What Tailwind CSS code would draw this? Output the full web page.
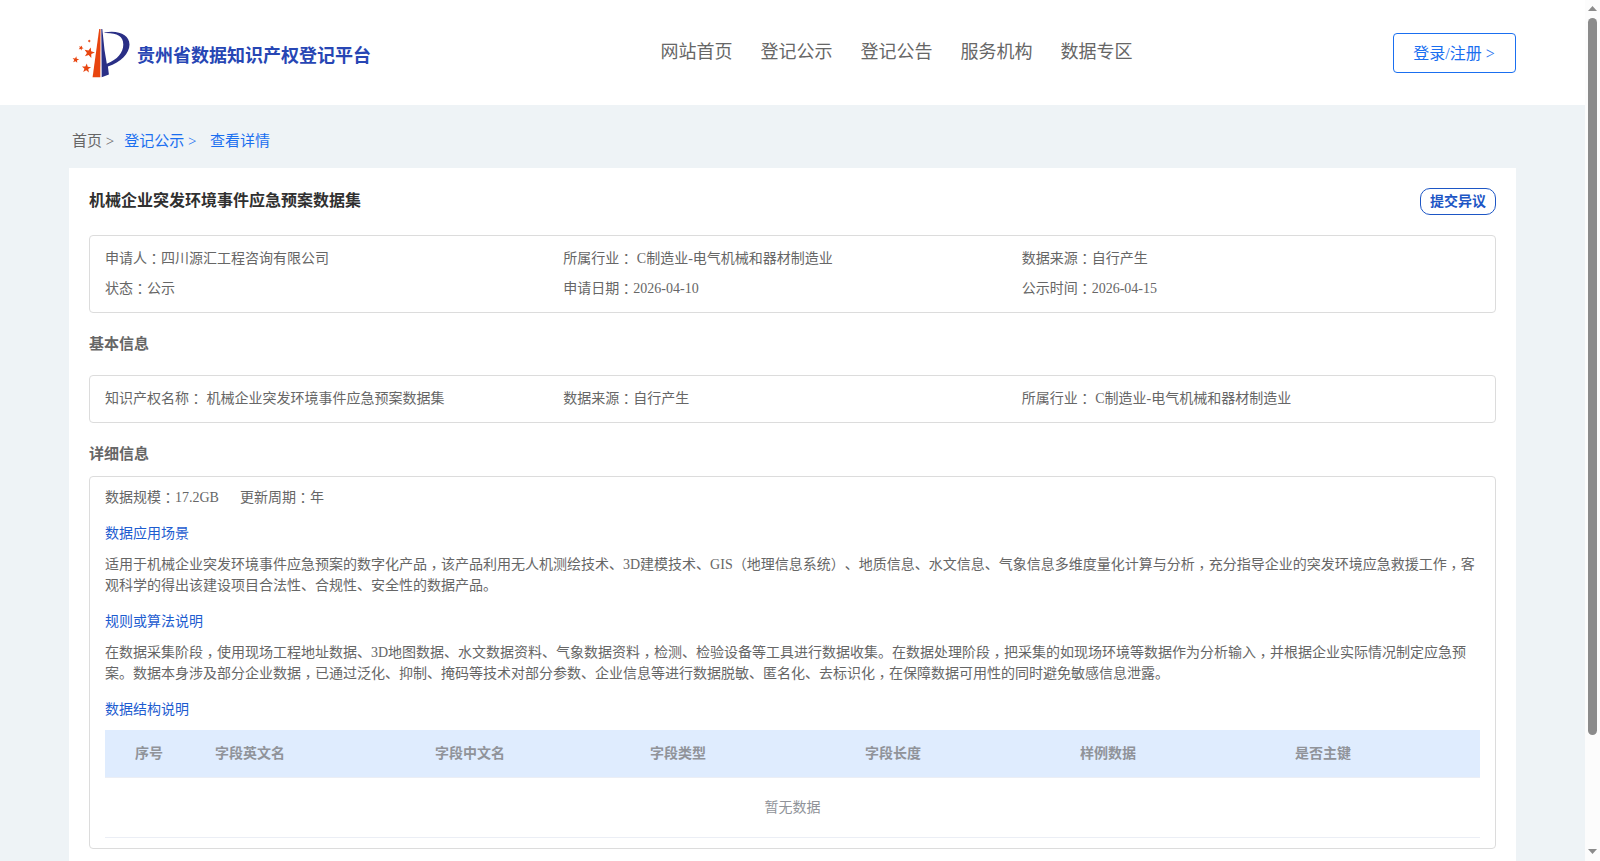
<!doctype html>
<html lang="zh-CN">
<head>
  <meta charset="utf-8" />
  <meta name="viewport" content="width=device-width,initial-scale=1" />
  <title>贵州省数据知识产权登记平台</title>
  <script src="https://cdn.jsdelivr.net/npm/@tailwindcss/browser@4"></script>
</head>
<body class="flex h-[861px] overflow-hidden bg-[#eef3f6] font-['Liberation_Serif','Noto_Sans_CJK_SC',serif] text-sm leading-[21px] text-[#666] [text-spacing-trim:space-all]">
  <div class="w-[1585px] shrink-0">

    <!-- Header -->
    <header class="flex h-[105px] bg-white pr-[69px] pl-[72px]">
      <div class="flex w-[588.5px] pt-[28px]">
        <svg class="h-[50px] w-[58px]" viewBox="0 0 58 50">
          <defs>
            <path id="star" d="M0-1L.25-.34.95-.31.4.13.59.81 0 .42-.59.81-.4.13-.95-.31-.25-.34z" />
          </defs>
          <path fill="#e8450f" d="M27.2 1h1.3l-.2 48.300h-7.700z" />
          <path fill="#2a2f86" d="M29.300 1h1l2.200 21 2.300 13.700C45.500 31.500 51.300 24.500 51.300 16.500 51.300 8 45 4.800 32.500 5.100v-.7C47 1.800 57.500 7 57.500 16.500c0 9-8.500 17.500-21.600 22.100l1 7.800-7.200 2.900z" />
          <g fill="#e8450f">
            <use href="#star" transform="translate(17.3 24.800) rotate(15) scale(5.600)" />
            <use href="#star" transform="translate(14.400 40.300) rotate(5) scale(4.800)" />
            <use href="#star" transform="translate(3.700 31.700) rotate(10) scale(3.500)" />
            <use href="#star" transform="translate(9 19.900) rotate(25) scale(2.600)" />
            <use href="#star" transform="translate(17.300 13) rotate(20) scale(1.700)" />
          </g>
        </svg>
        <div class="pt-[15px] pl-[7px] text-lg leading-[27px] font-bold text-[#2746b4]">贵州省数据知识产权登记平台</div>
      </div>
      <nav class="flex flex-1 gap-7 pt-[39px] text-lg leading-[27px]">
        <a>网站首页</a>
        <a>登记公示</a>
        <a>登记公告</a>
        <a>服务机构</a>
        <a>数据专区</a>
      </nav>
      <button class="mt-[33px] h-10 w-[123px] rounded border border-[#1a6ff0] pt-px pr-px text-base text-[#1a6ff0]">登录/注册 &gt;</button>
    </header>

    <!-- Breadcrumb -->
    <div class="flex h-[63px] pt-[25px] pl-[72px] text-[15px] leading-[22px]">
      <span class="mr-[10px]">首页 &gt;</span>
      <span class="mr-[13.5px] text-[#1a6ff0]">登记公示 &gt;</span>
      <span class="text-[#1a6ff0]">查看详情</span>
    </div>

    <main class="ml-[69px] h-[693px] w-[1447px] bg-white px-5 pt-5">
      <div class="flex h-[47px] justify-between">
        <h1 class="text-base leading-[25px] font-bold text-[#303030]">机械企业突发环境事件应急预案数据集</h1>
        <button class="h-[27px] w-[76px] rounded-[10px] border border-[#1d56c5] font-bold text-[#1d56c5]">提交异议</button>
      </div>

      <section class="grid h-[78px] grid-cols-3 content-start gap-y-[9px] rounded border border-[#dcdcdc] px-[15px] pt-[12px]">
        <div>申请人：四川源汇工程咨询有限公司</div>
        <div>所属行业： C制造业-电气机械和器材制造业</div>
        <div>数据来源：自行产生</div>
        <div>状态：公示</div>
        <div>申请日期：2026-04-10</div>
        <div>公示时间：2026-04-15</div>
      </section>

      <h2 class="h-[62px] pt-5 text-[15px] leading-[22px] font-bold">基本信息</h2>
      <section class="grid h-12 grid-cols-3 rounded border border-[#dcdcdc] px-[15px] pt-[12px]">
        <div>知识产权名称： 机械企业突发环境事件应急预案数据集</div>
        <div>数据来源：自行产生</div>
        <div>所属行业： C制造业-电气机械和器材制造业</div>
      </section>

      <h2 class="h-[53px] pt-5 text-[15px] leading-[22px] font-bold">详细信息</h2>
      <section class="h-[373px] rounded border border-[#dcdcdc] px-[15px] pt-[10px]">
        <div class="flex gap-[21px]">
          <div>数据规模：17.2GB</div>
          <div>更新周期：年</div>
        </div>
        <h3 class="mt-[15px] text-[#1d5cd0]">数据应用场景</h3>
        <p class="mt-[10px]">适用于机械企业突发环境事件应急预案的数字化产品，该产品利用无人机测绘技术、3D建模技术、GIS（地理信息系统）、地质信息、水文信息、气象信息多维度量化计算与分析，充分指导企业的突发环境应急救援工作，客观科学的得出该建设项目合法性、合规性、安全性的数据产品。</p>
        <h3 class="mt-[15px] text-[#1d5cd0]">规则或算法说明</h3>
        <p class="mt-[10px]">在数据采集阶段，使用现场工程地址数据、3D地图数据、水文数据资料、气象数据资料，检测、检验设备等工具进行数据收集。在数据处理阶段，把采集的如现场环境等数据作为分析输入，并根据企业实际情况制定应急预案。数据本身涉及部分企业数据，已通过泛化、抑制、掩码等技术对部分参数、企业信息等进行数据脱敏、匿名化、去标识化，在保障数据可用性的同时避免敏感信息泄露。</p>
        <h3 class="mt-[15px] text-[#1d5cd0]">数据结构说明</h3>

        <div class="mt-[10px] grid h-12 grid-cols-[80px_220px_215px_215px_215px_215px_1fr] items-center border-b border-[#ebeef5] bg-[#dfecfe] pl-[30px] font-bold text-[#909399]">
          <div>序号</div>
          <div>字段英文名</div>
          <div>字段中文名</div>
          <div>字段类型</div>
          <div>字段长度</div>
          <div>样例数据</div>
          <div>是否主键</div>
        </div>
        <div class="flex h-[60px] items-center justify-center border-b border-[#ebeef5] text-[#909399]">暂无数据</div>
      </section>
    </main>
  </div>

  <!-- Scrollbar -->
  <div class="flex h-full w-[15px] flex-col items-center bg-[#fcfcfc]">
    <svg class="mt-[6px] h-[5px] w-[9px]" viewBox="0 0 9 5"><path fill="#8b8b8b" d="M4.500 0L9 5H0z" /></svg>
    <div class="mt-[7px] h-[717px] w-[9px] rounded-full bg-[#8b8b8b]"></div>
    <svg class="mt-auto mb-[7px] h-[5px] w-[9px]" viewBox="0 0 9 5"><path fill="#8b8b8b" d="M4.500 5L0 0h9z" /></svg>
  </div>

  <script>
    // centred full-width colons and commas
    document.querySelectorAll("section p, section div").forEach(el => {
      if (el.children.length) return;
      el.innerHTML = el.innerHTML
        .replace(/：/g, `<span lang="zh-TW" class="align-[-1px] leading-[0] font-['Noto_Sans_CJK_TC']">：</span>`)
        .replace(/，/g, `<span lang="zh-TW" class="align-[-4px] leading-[0] font-['Noto_Sans_CJK_TC']">，</span>`);
    });
  </script>
</body>
</html>
